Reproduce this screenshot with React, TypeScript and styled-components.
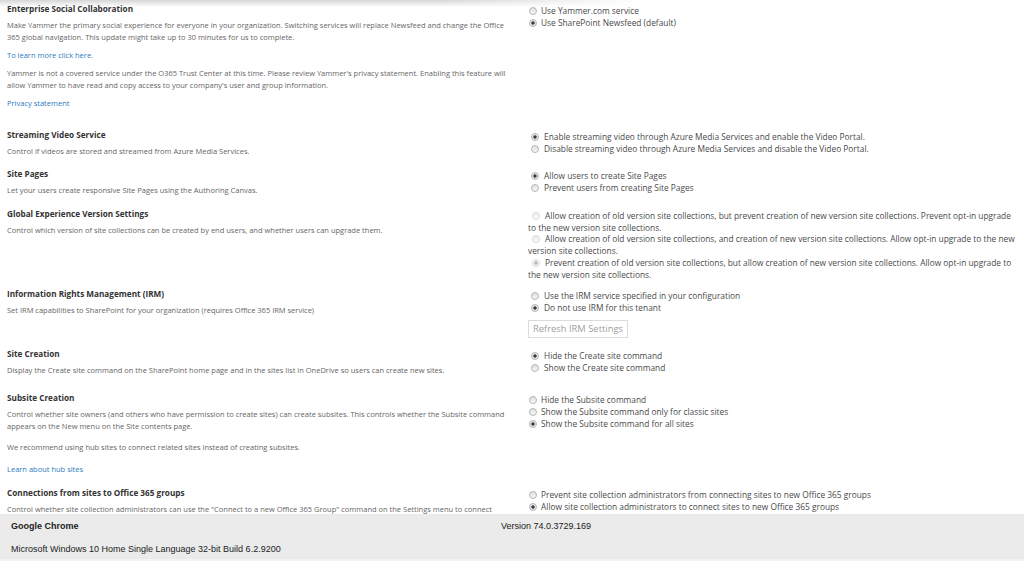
import styled, { createGlobalStyle } from "styled-components";

const GlobalStyle = createGlobalStyle`
  html, body {
    margin: 0;
    padding: 0;
    background: #fff;
  }
  body {
    font-family: "Open Sans", "Noto Sans", sans-serif;
  }
`;

const Screen = styled.div`
  position: relative;
  width: 1024px;
  height: 561px;
  display: flex;
  flex-direction: column;
  overflow: hidden;
`;

const TopShadow = styled.div`
  position: absolute;
  top: 0;
  left: 0;
  width: 640px;
  height: 7px;
  background: linear-gradient(to bottom, rgba(0, 0, 0, 0.16), rgba(0, 0, 0, 0));
  -webkit-mask-image: linear-gradient(to right, #000 70%, transparent);
  mask-image: linear-gradient(to right, #000 70%, transparent);
  pointer-events: none;
`;

const Content = styled.div`
  flex: 1;
  overflow: hidden;
  padding: 3px 0 0 7px;
`;

const Section = styled.div<{ $gap: number }>`
  display: grid;
  grid-template-columns: 521px 1fr;
  padding-bottom: ${(p) => p.$gap}px;
`;

const Info = styled.div`
  padding-right: 8px;
`;

const Title = styled.h3`
  margin: 0 0 4px;
  font-size: 8.2px;
  font-weight: 700;
  line-height: 12px;
  color: #333;
`;

const Text = styled.p<{ $mt?: number }>`
  margin: ${(p) => p.$mt ?? 0}px 0 0;
  font-size: 7.5px;
  line-height: 12px;
  color: #666;
  white-space: nowrap;
`;

const Anchor = styled.a`
  color: #2b7bbf;
  text-decoration: none;
  cursor: pointer;
`;

const Choices = styled.div<{ $lh?: number }>`
  padding-top: 2px;
  display: flex;
  flex-direction: column;
  align-items: flex-start;
  font-size: 8.35px;
  line-height: ${(p) => p.$lh ?? 12}px;
  color: #4a4a4a;
  white-space: nowrap;
`;

const Option = styled.label<{ $narrow?: boolean }>`
  display: flex;
  align-items: center;
  gap: ${(p) => (p.$narrow ? 4 : 5)}px;
  padding-left: ${(p) => (p.$narrow ? 1 : 3)}px;
`;

const WrapOption = styled.label`
  display: block;
`;

const Radio = styled.span<{ $checked?: boolean; $disabled?: boolean }>`
  display: inline-block;
  box-sizing: border-box;
  width: 8px;
  height: 8px;
  border-radius: 50%;
  flex-shrink: 0;
  border: 1px solid ${(p) => (p.$disabled ? "#dadada" : "#b4b4b4")};
  background: ${(p) =>
    p.$checked
      ? `radial-gradient(circle, ${p.$disabled ? "#b4b4b4" : "#3a3a3a"} 0 1.3px, ${
          p.$disabled ? "#f1f1f1" : "#e2e2e2"
        } 2px, #f6f6f6)`
      : p.$disabled
      ? "linear-gradient(#eeeeee, #fbfbfb)"
      : "linear-gradient(#e0e0e0, #f8f8f8)"};
`;

const InlineRadio = styled(Radio)`
  margin: 0 5px 0 4px;
  vertical-align: -1px;
`;

const Button = styled.button`
  margin-top: 6px;
  height: 18px;
  padding: 0 4px;
  border: 1px solid #dcdcdc;
  background: #fff;
  color: #a0a0a0;
  font-family: "Open Sans", "Noto Sans", sans-serif;
  font-size: 9.4px;
  line-height: 16px;
`;

const Footer = styled.div`
  height: 47px;
  box-sizing: border-box;
  padding: 6px 0 0 11px;
  background: #ebebeb;
  border-bottom: 2px solid #f3f3f3;
  font-family: "Liberation Sans", Arial, sans-serif;
  font-size: 9px;
  line-height: 12px;
  color: #222;
`;

const FooterRow = styled.div`
  display: flex;
`;

const Browser = styled.div`
  width: 490px;
  font-weight: 700;
`;

const OsLine = styled.div`
  margin-top: 11px;
`;

export default function App() {
  return (
    <Screen>
      <GlobalStyle />
      <Content>
        <Section $gap={20}>
          <Info>
            <Title>Enterprise Social Collaboration</Title>
            <Text>
              Make Yammer the primary social experience for everyone in your organization. Switching services will
              replace Newsfeed and change the Office
              <br />
              365 global navigation. This update might take up to 30 minutes for us to complete.
            </Text>
            <Text $mt={6}>
              <Anchor>To learn more click here.</Anchor>
            </Text>
            <Text $mt={6}>
              Yammer is not a covered service under the O365 Trust Center at this time. Please review Yammer's privacy
              statement. Enabling this feature will
              <br />
              allow Yammer to have read and copy access to your company's user and group information.
            </Text>
            <Text $mt={6}>
              <Anchor>Privacy statement</Anchor>
            </Text>
          </Info>
          <Choices>
            <Option $narrow>
              <Radio />
              Use Yammer.com service
            </Option>
            <Option $narrow>
              <Radio $checked />
              Use SharePoint Newsfeed (default)
            </Option>
          </Choices>
        </Section>

        <Section $gap={11}>
          <Info>
            <Title>Streaming Video Service</Title>
            <Text>Control if videos are stored and streamed from Azure Media Services.</Text>
          </Info>
          <Choices>
            <Option>
              <Radio $checked />
              Enable streaming video through Azure Media Services and enable the Video Portal.
            </Option>
            <Option>
              <Radio />
              Disable streaming video through Azure Media Services and disable the Video Portal.
            </Option>
          </Choices>
        </Section>

        <Section $gap={12}>
          <Info>
            <Title>Site Pages</Title>
            <Text>Let your users create responsive Site Pages using the Authoring Canvas.</Text>
          </Info>
          <Choices>
            <Option>
              <Radio $checked />
              Allow users to create Site Pages
            </Option>
            <Option>
              <Radio />
              Prevent users from creating Site Pages
            </Option>
          </Choices>
        </Section>

        <Section $gap={8}>
          <Info>
            <Title>Global Experience Version Settings</Title>
            <Text>
              Control which version of site collections can be created by end users, and whether users can upgrade
              them.
            </Text>
          </Info>
          <Choices $lh={11.7}>
            <WrapOption>
              <InlineRadio $disabled />
              Allow creation of old version site collections, but prevent creation of new version site collections.
              Prevent opt-in upgrade
              <br />
              to the new version site collections.
            </WrapOption>
            <WrapOption>
              <InlineRadio $disabled />
              Allow creation of old version site collections, and creation of new version site collections. Allow
              opt-in upgrade to the new
              <br />
              version site collections.
            </WrapOption>
            <WrapOption>
              <InlineRadio $disabled $checked />
              Prevent creation of old version site collections, but allow creation of new version site collections.
              Allow opt-in upgrade to
              <br />
              the new version site collections.
            </WrapOption>
          </Choices>
        </Section>

        <Section $gap={10}>
          <Info>
            <Title>Information Rights Management (IRM)</Title>
            <Text>Set IRM capabilities to SharePoint for your organization (requires Office 365 IRM service)</Text>
          </Info>
          <Choices>
            <Option>
              <Radio />
              Use the IRM service specified in your configuration
            </Option>
            <Option>
              <Radio $checked />
              Do not use IRM for this tenant
            </Option>
            <Button disabled>Refresh IRM Settings</Button>
          </Choices>
        </Section>

        <Section $gap={16}>
          <Info>
            <Title>Site Creation</Title>
            <Text>
              Display the Create site command on the SharePoint home page and in the sites list in OneDrive so users can
              create new sites.
            </Text>
          </Info>
          <Choices>
            <Option>
              <Radio $checked />
              Hide the Create site command
            </Option>
            <Option>
              <Radio />
              Show the Create site command
            </Option>
          </Choices>
        </Section>

        <Section $gap={12}>
          <Info>
            <Title>Subsite Creation</Title>
            <Text>
              Control whether site owners (and others who have permission to create sites) can create subsites. This
              controls whether the Subsite command
              <br />
              appears on the New menu on the Site contents page.
            </Text>
            <Text $mt={9}>We recommend using hub sites to connect related sites instead of creating subsites.</Text>
            <Text $mt={10}>
              <Anchor>Learn about hub sites</Anchor>
            </Text>
          </Info>
          <Choices>
            <Option $narrow>
              <Radio />
              Hide the Subsite command
            </Option>
            <Option $narrow>
              <Radio />
              Show the Subsite command only for classic sites
            </Option>
            <Option $narrow>
              <Radio $checked />
              Show the Subsite command for all sites
            </Option>
          </Choices>
        </Section>

        <Section $gap={0}>
          <Info>
            <Title>Connections from sites to Office 365 groups</Title>
            <Text>
              Control whether site collection administrators can use the "Connect to a new Office 365 Group" command on
              the Settings menu to connect
            </Text>
          </Info>
          <Choices>
            <Option $narrow>
              <Radio />
              Prevent site collection administrators from connecting sites to new Office 365 groups
            </Option>
            <Option $narrow>
              <Radio $checked />
              Allow site collection administrators to connect sites to new Office 365 groups
            </Option>
          </Choices>
        </Section>
      </Content>
      <Footer>
        <FooterRow>
          <Browser>Google Chrome</Browser>
          <div>Version 74.0.3729.169</div>
        </FooterRow>
        <OsLine>Microsoft Windows 10 Home Single Language 32-bit Build 6.2.9200</OsLine>
      </Footer>
      <TopShadow />
    </Screen>
  );
}
